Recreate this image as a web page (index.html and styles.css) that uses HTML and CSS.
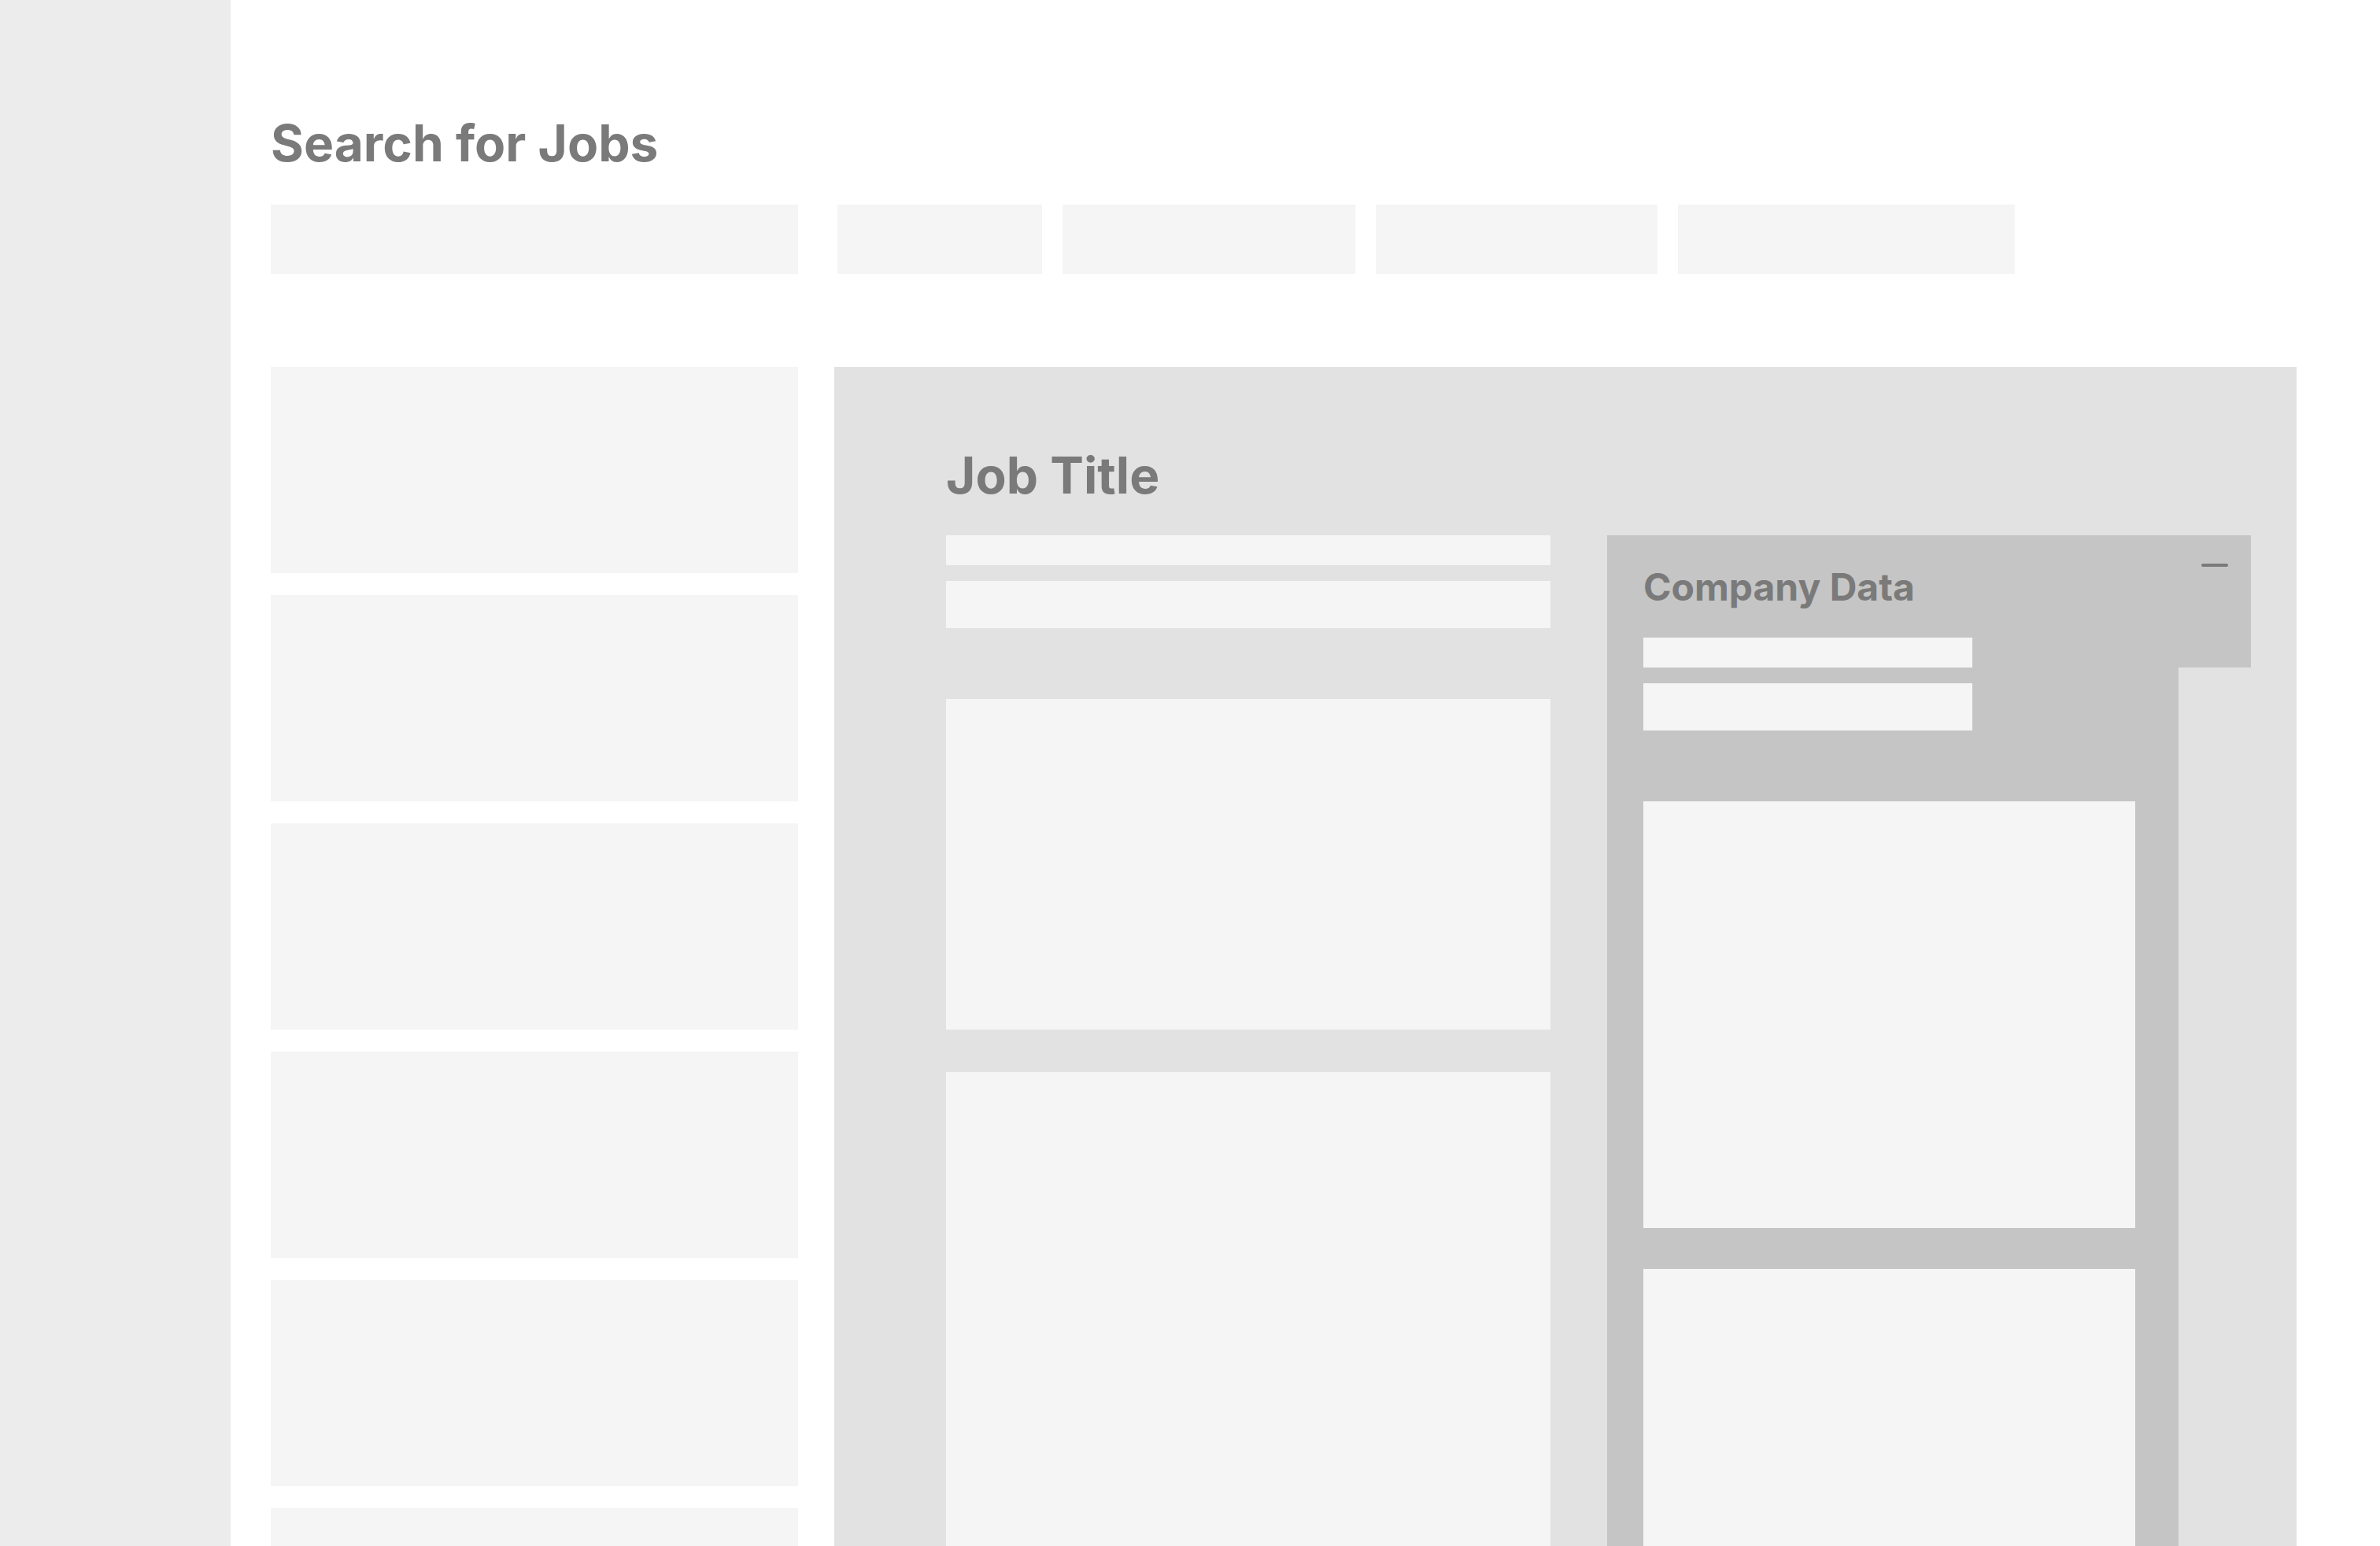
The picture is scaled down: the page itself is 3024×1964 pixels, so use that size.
FILE: index.html
```html
<!DOCTYPE html>
<html lang="en">
<head>
    <meta charset="UTF-8">
    <meta name="viewport" content="width=device-width, initial-scale=1.0">
    <title>Search for Jobs</title>
    <link rel="stylesheet" href="styles.css">
</head>
<body>
    <div class="app">
        <aside class="sidebar"></aside>

        <main class="main">
            <h1 class="page-title">Search for Jobs</h1>

            <div class="search-row">
                <div class="search-box"></div>
                <div class="filters">
                    <div class="filter filter-1"></div>
                    <div class="filter filter-2"></div>
                    <div class="filter filter-3"></div>
                    <div class="filter filter-4"></div>
                </div>
            </div>

            <div class="content">
                <div class="job-list">
                    <div class="job-card"></div>
                    <div class="job-card"></div>
                    <div class="job-card"></div>
                    <div class="job-card"></div>
                    <div class="job-card"></div>
                    <div class="job-card"></div>
                    <div class="job-card"></div>
                </div>

                <section class="job-detail">
                    <h2 class="job-title">Job Title</h2>

                    <div class="detail-body">
                        <div class="detail-main">
                            <div class="line line-sm"></div>
                            <div class="line line-md"></div>
                            <div class="block block-desc"></div>
                            <div class="block block-reqs"></div>
                        </div>

                        <div class="company-card">
                            <button class="collapse-btn" aria-label="Collapse"></button>
                            <h3 class="company-title">Company Data</h3>
                            <div class="line line-sm company-line"></div>
                            <div class="line line-md company-line"></div>
                            <div class="block company-block first"></div>
                            <div class="block company-block second"></div>
                        </div>
                    </div>
                </section>
            </div>
        </main>
    </div>
</body>
</html>
```

FILE: styles.css
```css
* {
    box-sizing: border-box;
    margin: 0;
    padding: 0;
}

html,
body {
    height: 100%;
    overflow: hidden;
}

body {
    background-color: #fff;
    font-family: 'Inter', 'Liberation Sans', sans-serif;
    color: #7a7a7a;
}

.app {
    display: flex;
    height: 100vh;
}

.sidebar {
    width: 293px;
    flex-shrink: 0;
    background-color: #ececec;
}

.main {
    flex: 1;
    padding: 150px 0 0 51px;
}

.page-title {
    font-size: 64px;
    line-height: 1;
    font-weight: 700;
}

/* search + filters */
.search-row {
    display: flex;
    gap: 50px;
    margin-top: 46px;
}

.search-box {
    width: 670px;
    height: 88px;
    background-color: #f5f5f5;
}

.filters {
    display: flex;
    gap: 26px;
}

.filter {
    height: 88px;
    background-color: #f5f5f5;
}

.filter-1 { width: 260px; }
.filter-2 { width: 372px; }
.filter-3 { width: 358px; }
.filter-4 { width: 428px; }

/* list + detail */
.content {
    display: flex;
    gap: 46px;
    margin-top: 118px;
}

.job-list {
    width: 670px;
    display: flex;
    flex-direction: column;
    gap: 28px;
    flex-shrink: 0;
}

.job-card {
    height: 262px;
    background-color: #f5f5f5;
}

.job-detail {
    width: 1858px;
    background-color: #e2e2e2;
    padding: 106px 0 0 142px;
    min-height: 1600px;
}

.job-title {
    font-size: 64px;
    line-height: 1;
    font-weight: 700;
}

.detail-body {
    display: flex;
    gap: 72px;
    margin-top: 44px;
}

.detail-main {
    width: 768px;
    display: flex;
    flex-direction: column;
}

.line {
    background-color: #f5f5f5;
}

.line-sm {
    height: 38px;
}

.line-md {
    height: 60px;
    margin-top: 20px;
}

.block {
    background-color: #f5f5f5;
}

.block-desc {
    height: 420px;
    margin-top: 90px;
}

.block-reqs {
    height: 640px;
    margin-top: 54px;
}

/* company card */
.company-card {
    position: relative;
    width: 726px;
    background-color: #c5c5c5;
    padding: 42px 55px 0 46px;
    min-height: 1400px;
}

/* the header strip sticks out past the card */
.company-card::before {
    content: '';
    position: absolute;
    top: 0;
    left: 100%;
    width: 92px;
    height: 168px;
    background-color: #c5c5c5;
}

.collapse-btn {
    position: absolute;
    top: 36px;
    left: 755px;
    width: 34px;
    height: 4px;
    border: none;
    border-radius: 2px;
    background-color: #7a7a7a;
    cursor: pointer;
    z-index: 1;
}

.company-title {
    font-size: 48px;
    line-height: 1;
    font-weight: 700;
}

.company-line {
    width: 418px;
}

.company-line.line-sm {
    margin-top: 40px;
}

.company-block.first {
    height: 542px;
    margin-top: 90px;
}

.company-block.second {
    height: 542px;
    margin-top: 52px;
}
```
